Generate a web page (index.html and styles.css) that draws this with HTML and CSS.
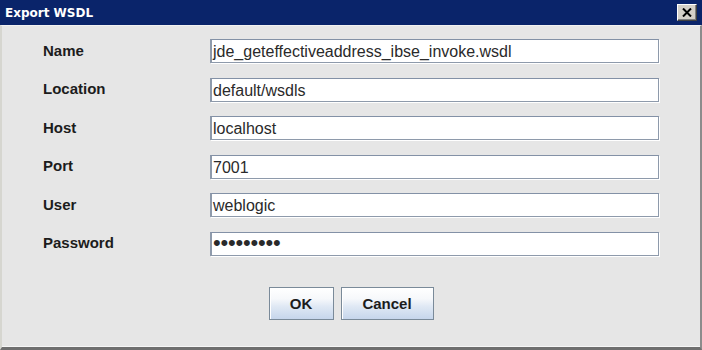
FILE: index.html
```html
<!DOCTYPE html>
<html lang="en">
<head>
    <meta charset="UTF-8">
    <meta name="viewport" content="width=device-width, initial-scale=1.0">
    <title>Export WSDL</title>
    <link rel="stylesheet" href="styles.css">
</head>
<body>
    <div class="window">
        <div class="titlebar">
            <span class="title">Export WSDL</span>
            <button class="close-button" aria-label="Close">
                <svg width="10" height="9" viewBox="0 0 10 9">
                    <path d="M1 0.5 L9 8.5 M9 0.5 L1 8.5" stroke="#000" stroke-width="2" fill="none"/>
                </svg>
            </button>
        </div>
        <div class="dialog-body">
            <div class="form">
                <label class="form-label">Name</label>
                <div class="field">jde_geteffectiveaddress_ibse_invoke.wsdl</div>
                <label class="form-label">Location</label>
                <div class="field">default/wsdls</div>
                <label class="form-label">Host</label>
                <div class="field">localhost</div>
                <label class="form-label">Port</label>
                <div class="field">7001</div>
                <label class="form-label">User</label>
                <div class="field">weblogic</div>
                <label class="form-label">Password</label>
                <div class="field password">•••••••••</div>
            </div>
            <div class="buttons">
                <button class="dialog-button ok">OK</button>
                <button class="dialog-button cancel">Cancel</button>
            </div>
        </div>
    </div>
</body>
</html>
```

FILE: styles.css
```css
body {
    margin: 0;
    padding: 0;
    width: 702px;
    height: 350px;
    background-color: #e6e6e6;
    font-family: "Liberation Sans", Arial, sans-serif;
    overflow: hidden;
}
.window {
    height: 350px;
    display: flex;
    flex-direction: column;
}
.titlebar {
    height: 25px;
    flex: none;
    background-color: #0a246a;
    display: flex;
    align-items: center;
    justify-content: space-between;
    padding: 0 5px 0 5px;
}
.title {
    color: #ffffff;
    font-family: "DejaVu Sans", sans-serif;
    font-weight: bold;
    font-size: 12px;
    padding-top: 1px;
}
.close-button {
    width: 20px;
    height: 17px;
    padding: 0;
    margin: 0;
    background-color: #d4d0c8;
    border: 1px solid;
    border-color: #ffffff #404040 #404040 #ffffff;
    box-shadow: inset -1px -1px 0 #808080;
    display: flex;
    align-items: center;
    justify-content: center;
}
.dialog-body {
    flex: 1;
    border-top: 1px solid #f2f2f2;
    border-left: 2px solid #d6d6d0;
    border-right: 2px solid #8c8c8c;
    border-bottom: 3px solid #6f6f6f;
    box-shadow: inset 0 -1px 0 #f6f6f6;
    padding: 13px 0 0 41px;
}
.form {
    display: grid;
    grid-template-columns: 167px 449px;
    grid-auto-rows: 24px;
    row-gap: 14.5px;
    align-items: center;
}
.form-label {
    font-weight: bold;
    font-size: 15px;
    color: #1c1c1c;
    margin-top: -2px;
}
.field {
    box-sizing: border-box;
    height: 24px;
    background-color: #ffffff;
    border: 1px solid #8e9aab;
    border-left-width: 2px;
    border-top-color: #8391a6;
    box-shadow: 1px 1px 0 #ffffff;
    font-size: 16px;
    color: #2a2a2a;
    padding: 2px 0 0 1px;
    line-height: 20px;
    white-space: nowrap;
}
.password {
    font-size: 22px;
    line-height: 18px;
    padding-top: 1px;
    letter-spacing: -0.2px;
}
.buttons {
    display: flex;
    justify-content: center;
    gap: 7px;
    margin: 31px 0 0 -41px;
}
.dialog-button {
    height: 33px;
    font-family: "Liberation Sans", Arial, sans-serif;
    font-weight: bold;
    font-size: 15px;
    color: #1c1c1c;
    border: 1px solid #7a8a99;
    box-shadow: inset 1px 1px 0 #ffffff;
    background: linear-gradient(#ffffff 0%, #f6f8fb 35%, #dfe8f4 60%, #c6d6ec 100%);
    padding: 0;
}
.ok {
    width: 65px;
}
.cancel {
    width: 93px;
}
```
